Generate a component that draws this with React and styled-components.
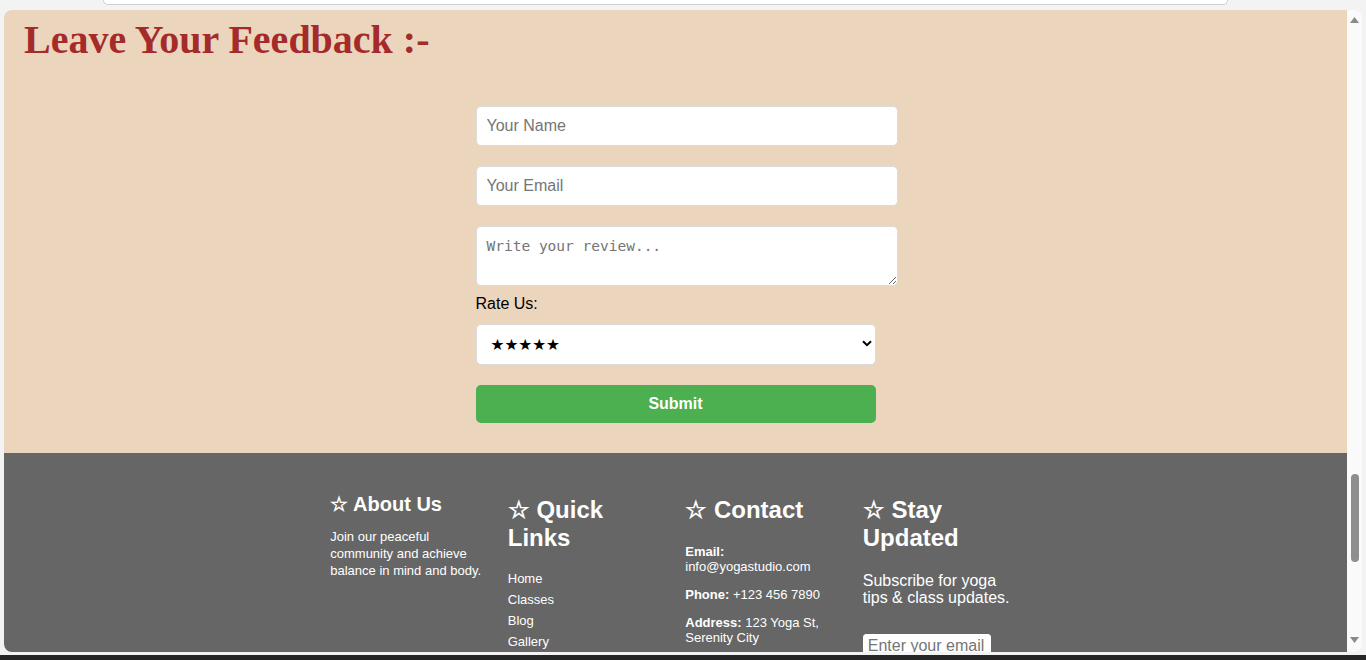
import React from 'react';
import styled, { createGlobalStyle } from 'styled-components';

const GlobalStyle = createGlobalStyle`
  html, body {
    margin: 0;
    padding: 0;
    width: 1366px;
    height: 660px;
    overflow: hidden;
    background: #f3f3f3;
    font-family: "Liberation Sans", Arial, sans-serif;
  }
`;

const Frame = styled.div`
  width: 1366px;
  height: 660px;
  display: flex;
  flex-direction: column;
  background: #f3f3f3;
`;

const TopStrip = styled.div`
  height: 10px;
  padding-left: 103px;
`;

const AddressPill = styled.div`
  width: 1125px;
  height: 5px;
  box-sizing: border-box;
  background: #fff;
  border: 1px solid #cfcfcf;
  border-top: none;
  border-radius: 0 0 12px 12px;
`;

const Viewport = styled.div`
  margin: 0 4px;
  height: 642px;
  display: flex;
  border-radius: 8px;
  overflow: hidden;
`;

const Page = styled.div`
  flex: 1;
  overflow: hidden;
  display: flex;
  flex-direction: column;
`;

const Scrollbar = styled.div`
  width: 15px;
  background: #fafafa;
  display: flex;
  flex-direction: column;
  align-items: center;
`;

const Arrow = styled.svg`
  display: block;
  margin-top: ${p => p.$top || 0}px;
  margin-bottom: ${p => p.$bottom || 0}px;
`;

const Thumb = styled.div`
  width: 8px;
  height: 88px;
  margin-top: 451px;
  border-radius: 4px;
  background: #8e8e8e;
`;

const Spacer = styled.div`
  flex: 1;
`;

const Taskbar = styled.div`
  margin-top: 3px;
  height: 5px;
  background: #262626;
`;

// ---- feedback ----
const Feedback = styled.section`
  background: #ebd5bc;
  padding: 0 20px 30px;
`;

const Title = styled.h1`
  margin: 6px 0 43px;
  font-family: "Liberation Serif", "Times New Roman", serif;
  font-weight: bold;
  font-size: 40px;
  color: #a52a2a;
`;

const Form = styled.form`
  width: 400px;
  margin: 0 auto;
  display: flex;
  flex-direction: column;
`;

const TextInput = styled.input`
  display: block;
  width: 100%;
  padding: 10px;
  margin-bottom: 20px;
  border: 1px solid #dcdcdc;
  border-radius: 5px;
  background: #fff;
  font-family: "Liberation Sans", Arial, sans-serif;
  font-size: 16px;
  line-height: 18px;
  outline: none;
  &::placeholder { color: #757575; }
`;

const Review = styled.textarea`
  display: block;
  width: 100%;
  height: 38px;
  padding: 10px;
  border: 1px solid #dcdcdc;
  border-radius: 5px;
  background: #fff;
  font-family: "DejaVu Sans Mono", monospace;
  font-size: 14.5px;
  line-height: 18px;
  resize: vertical;
  outline: none;
  &::placeholder { color: #757575; }
`;

const Label = styled.label`
  margin-top: 9px;
  font-size: 16px;
  color: #000;
`;

const SelectWrap = styled.div`
  position: relative;
  margin-top: 11px;
  width: 400px;
  height: 41px;
`;

const Select = styled.select`
  width: 100%;
  height: 41px;
  box-sizing: border-box;
  padding: 0 10px 0 14px;
  appearance: none;
  background: #fff;
  border: 1px solid #dcdcdc;
  border-radius: 5px;
  font-family: "DejaVu Sans", sans-serif;
  font-size: 15.5px;
  color: #000;
  outline: none;
`;

const Chevron = styled.svg`
  position: absolute;
  right: 4px;
  top: 16px;
  pointer-events: none;
`;

const Submit = styled.button`
  margin-top: 20px;
  width: 100%;
  height: 38px;
  border: none;
  border-radius: 5px;
  background: #4caf50;
  color: #fff;
  font-family: "Liberation Sans", Arial, sans-serif;
  font-weight: bold;
  font-size: 16px;
`;

// ---- footer ----
const Footer = styled.footer`
  flex: 1;
  background: #666;
  color: #fff;
  display: grid;
  grid-template-columns: repeat(4, 152px);
  column-gap: 25.5px;
  justify-content: center;
  align-items: start;
  padding-right: 6px;
`;

const Column = styled.div`
  display: flex;
  flex-direction: column;
  align-items: flex-start;
`;

const ColTitle = styled.h2`
  margin: ${p => p.$small ? 40 : 43}px 0 0;
  font-size: ${p => p.$small ? 20 : 24}px;
  font-weight: bold;
  line-height: 1.15;
`;

const AboutText = styled.p`
  margin: 12px 0 0;
  font-size: 13px;
  line-height: 17px;
`;

const LinkList = styled.ul`
  list-style: none;
  margin: 17px 0 0;
  padding: 0;
  font-size: 13px;
  line-height: 21px;
`;

const ContactBlock = styled.div`
  margin-top: 20px;
`;

const ContactLine = styled.p`
  margin: 0 0 13px;
  font-size: 13px;
  line-height: 15px;
`;

const SubscribeText = styled.p`
  margin: 21px 0 0;
  font-size: 16px;
  line-height: 17.3px;
`;

const EmailInput = styled.input`
  margin-top: 27px;
  width: 128px;
  box-sizing: border-box;
  padding: 2px 4px 1px;
  border: 1px solid #fff;
  border-radius: 3px;
  background: #fff;
  font-family: "Liberation Sans", Arial, sans-serif;
  font-size: 16px;
  outline: none;
  &::placeholder { color: #757575; }
`;

const SubscribeButton = styled.button`
  margin-top: 8px;
  padding: 6px 12px;
  border: none;
  border-radius: 3px;
  background: #4caf50;
  color: #fff;
`;

export default function App() {
  return (
    <Frame>
      <GlobalStyle />
      <TopStrip><AddressPill /></TopStrip>
      <Viewport>
        <Page>
          <Feedback>
            <Title>Leave Your Feedback :-</Title>
            <Form onSubmit={e => e.preventDefault()}>
              <TextInput type="text" placeholder="Your Name" />
              <TextInput type="email" placeholder="Your Email" />
              <Review placeholder="Write your review..." />
              <Label>Rate Us:</Label>
              <SelectWrap>
                <Select defaultValue="5">
                  <option value="5">★★★★★</option>
                  <option value="4">★★★★</option>
                  <option value="3">★★★</option>
                  <option value="2">★★</option>
                  <option value="1">★</option>
                </Select>
                <Chevron width="10" height="7" viewBox="0 0 10 7">
                  <path d="M1 1.2 L5 5.2 L9 1.2" fill="none" stroke="#000" strokeWidth="2" />
                </Chevron>
              </SelectWrap>
              <Submit type="submit">Submit</Submit>
            </Form>
          </Feedback>
          <Footer>
            <Column>
              <ColTitle $small>☆ About Us</ColTitle>
              <AboutText>Join our peaceful community and achieve balance in mind and body.</AboutText>
            </Column>
            <Column>
              <ColTitle>☆ Quick Links</ColTitle>
              <LinkList>
                <li>Home</li>
                <li>Classes</li>
                <li>Blog</li>
                <li>Gallery</li>
                <li>Contact</li>
              </LinkList>
            </Column>
            <Column>
              <ColTitle>☆ Contact</ColTitle>
              <ContactBlock>
                <ContactLine><strong>Email:</strong> info@yogastudio.com</ContactLine>
                <ContactLine><strong>Phone:</strong> +123 456 7890</ContactLine>
                <ContactLine><strong>Address:</strong> 123 Yoga St, Serenity City</ContactLine>
              </ContactBlock>
            </Column>
            <Column>
              <ColTitle>☆ Stay Updated</ColTitle>
              <SubscribeText>Subscribe for yoga tips &amp; class updates.</SubscribeText>
              <EmailInput type="email" placeholder="Enter your email" />
              <SubscribeButton>Subscribe</SubscribeButton>
            </Column>
          </Footer>
        </Page>
        <Scrollbar>
          <Arrow $top={7} width="9" height="6" viewBox="0 0 9 6">
            <path d="M4.5 0 L9 6 L0 6 Z" fill="#8a8a8a" />
          </Arrow>
          <Thumb />
          <Spacer />
          <Arrow $bottom={9} width="9" height="6" viewBox="0 0 9 6">
            <path d="M0 0 L9 0 L4.5 6 Z" fill="#8a8a8a" />
          </Arrow>
        </Scrollbar>
      </Viewport>
      <Taskbar />
    </Frame>
  );
}
